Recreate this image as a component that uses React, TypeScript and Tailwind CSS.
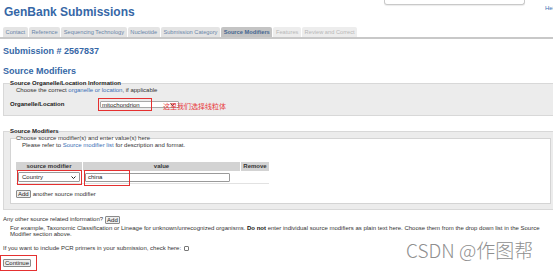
import React from 'react'

type Tab = { label: string; state: 'done' | 'active' | 'off' }

const TABS: Tab[] = [
  { label: 'Contact', state: 'done' },
  { label: 'Reference', state: 'done' },
  { label: 'Sequencing Technology', state: 'done' },
  { label: 'Nucleotide', state: 'done' },
  { label: 'Submission Category', state: 'done' },
  { label: 'Source Modifiers', state: 'active' },
  { label: 'Features', state: 'off' },
  { label: 'Review and Correct', state: 'off' },
]

function Chevron() {
  return (
    <svg width="5" height="3" viewBox="0 0 10 6" className="shrink-0">
      <path d="M1 1l4 4 4-4" fill="none" stroke="#222" strokeWidth="2" />
    </svg>
  )
}

function Btn({ label }: { label: string }) {
  return (
    <span className="inline-flex h-[8px] items-center rounded-[1px] border border-[#8a8a8a] bg-[#efefef] px-[1px] text-[6px] leading-[6px] text-[#222]">
      {label}
    </span>
  )
}

export default function App() {
  return (
    <div className="relative h-[271px] w-[553px] overflow-hidden bg-white font-['Liberation_Sans',Arial,sans-serif] text-[6px] leading-[7px] text-[#333]">
      {/* header */}
      <header className="flex h-[27px] items-start">
        <h1 className="flex-1 pl-[4px] pt-[6px] text-[12px] font-bold leading-[12px] text-[#3667a6]">GenBank Submissions</h1>
        <div className="flex w-[169px] shrink-0 items-start">
          <div className="h-[5px] w-[141px] shrink-0 rounded-b-[3px] border border-t-0 border-[#c9c9c9] shadow-[0_1px_1px_rgba(0,0,0,0.08)]" />
          <a className="ml-[20px] mt-[5px] whitespace-nowrap text-[#3a6fb5]">Help</a>
        </div>
      </header>

      {/* wizard tabs */}
      <nav className="flex h-[12px] gap-[1px] border-b-[2px] border-[#c8c8c8] pl-[3px]">
        {TABS.map(t => (
          <span
            key={t.label}
            className={`h-[10px] whitespace-nowrap rounded-t-[2px] px-[2.6px] text-[5.7px] leading-[10px] ${
              t.state === 'active'
                ? 'bg-[#c4c4c4] font-bold text-[#456690]'
                : t.state === 'done'
                ? 'bg-[#e4e4e4] text-[#6a84a8]'
                : 'bg-[#ededed] text-[#b8b8b8]'
            }`}
          >
            {t.label}
          </span>
        ))}
      </nav>

      <h2 className="mt-[7px] pl-[3px] text-[9px] font-bold leading-[11px] text-[#3667a6]">Submission # 2567837</h2>
      <h2 className="mt-[9px] pl-[3px] text-[9px] font-bold leading-[11px] text-[#3667a6]">Source Modifiers</h2>

      {/* organelle */}
      <fieldset className="ml-[3px] mt-[3px] w-[554px] border border-[#d8d8d8] bg-[#ececec] pb-[4px] pl-[6px]">
        <legend className="font-bold leading-[7px] text-[#222]">Source Organelle/Location Information</legend>
        <p className="pl-[6px]">
          Choose the correct <a className="text-[#3a6fb5]">organelle or location</a>, if applicable
        </p>
        <div className="mt-[4px] flex h-[13px] items-center">
          <span className="w-[90px] font-bold text-[#222]">Organelle/Location</span>
          <div className="relative">
            <div className="flex h-[7px] w-[79px] items-center justify-between rounded-[1px] border border-[#a8a8a8] bg-white pl-[1px] pr-[3px] leading-[6px] text-[#222]">
              mitochondrion
              <Chevron />
            </div>
            <span className="absolute -left-[2px] -top-[3px] h-[13px] w-[54px] border-[1.5px] border-[#e53030]" />
            <span className="absolute left-[63px] top-[2px] whitespace-nowrap font-['Noto_Sans_CJK_SC',sans-serif] text-[7px] leading-[7px] text-[#e83a3a]">
              这里我们选择线粒体
            </span>
          </div>
        </div>
      </fieldset>

      {/* source modifiers */}
      <fieldset className="ml-[3px] mt-[12px] w-[554px] border border-[#d8d8d8] bg-[#ececec] pb-[5px] pl-[6px]">
        <legend className="font-bold leading-[7px] text-[#222]">Source Modifiers</legend>
        <fieldset className="w-[541px] border border-[#d4d4d4] bg-white pb-[5px] pl-[5px]">
          <legend className="leading-[7px] text-[#333]">Choose source modifier(s) and enter value(s) here</legend>
          <p className="pl-[6px]">
            Please refer to <a className="text-[#3a6fb5]">Source modifier list</a> for description and format.
          </p>

          <div className="mt-[13px] w-[253px]">
            <div className="grid grid-cols-[66px_157px_28px] gap-x-[1px] font-bold text-[#333]">
              <span className="h-[9px] bg-[#d3d3d3] text-center leading-[9px]">source modifier</span>
              <span className="h-[9px] bg-[#d3d3d3] text-center leading-[9px]">value</span>
              <span className="h-[9px] bg-[#d3d3d3] text-center leading-[9px]">Remove</span>
            </div>
            <div className="grid h-[13px] grid-cols-[66px_157px_28px] items-center gap-x-[1px] border-b border-[#e2e2e2]">
              <div className="relative pl-[2px]">
                <div className="flex h-[10px] w-[62px] items-center justify-between rounded-[1px] border border-[#9a9a9a] bg-white pl-[3px] pr-[3px] text-[#222]">
                  Country
                  <Chevron />
                </div>
                <span className="absolute -top-[2.5px] left-[1px] h-[15.5px] w-[65px] border-[1.5px] border-[#e53030]" />
              </div>
              <div className="relative col-span-2 pl-[2px]">
                <div className="flex h-[9px] w-[145px] items-center rounded-[1px] border border-[#9a9a9a] bg-white pl-[2px] text-[#222]">china</div>
                <span className="absolute -top-[3px] left-[1px] h-[16px] w-[46px] border-[1.5px] border-[#e53030]" />
              </div>
            </div>
          </div>

          <div className="mt-[6px] flex h-[8px] items-center gap-[2px]">
            <Btn label="Add" />
            <span>another source modifier</span>
          </div>
        </fieldset>
      </fieldset>

      {/* extra */}
      <div className="mt-[6px] pl-[3px]">
        <p className="flex h-[7px] items-center gap-[2px]">
          Any other source related information? <Btn label="Add" />
        </p>
        <p className="mt-[2px] whitespace-nowrap pl-[7px] leading-[6px]">
          For example, Taxonomic Classification or Lineage for unknown/unrecognized organisms. <b className="text-[#111]">Do not</b> enter individual source modifiers as plain text here. Choose them from the drop down list in the Source
          <br />
          Modifier section above.
        </p>
        <p className="mt-[8px] flex h-[7px] items-center">
          If you want to include PCR primers in your submission, check here:
          <span className="ml-[3px] h-[5px] w-[5px] rounded-[1px] border border-[#777] bg-white" />
        </p>
        <div className="relative mt-[7px] w-fit">
          <Btn label="Continue" />
          <span className="absolute -left-[3px] -top-[4px] h-[16px] w-[37px] border-[1.5px] border-[#e53030]" />
        </div>
      </div>

      {/* watermark */}
      <span className="absolute left-[406px] top-[240px] whitespace-nowrap font-['Noto_Sans_CJK_SC',sans-serif] text-[19px] font-light leading-[19px] text-[#8f8f8f]">
        CSDN @作图帮
      </span>
    </div>
  )
}
